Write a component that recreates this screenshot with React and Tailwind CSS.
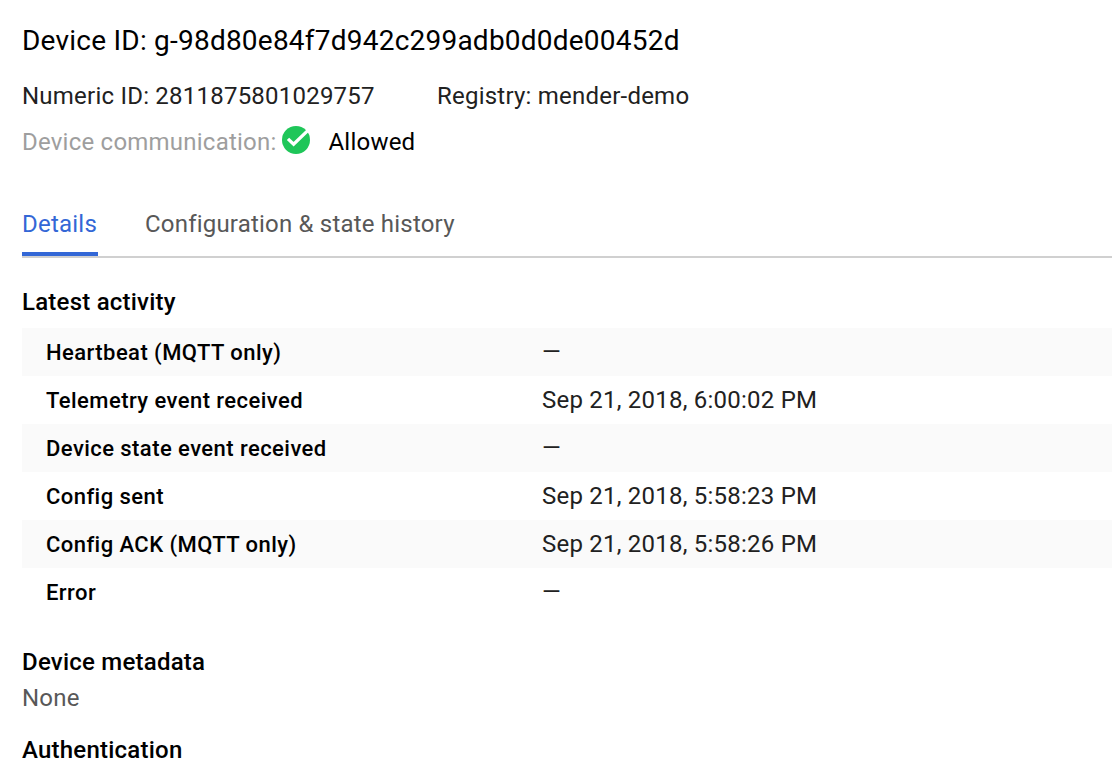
const activity = [
  ["Heartbeat (MQTT only)", "—"],
  ["Telemetry event received", "Sep 21, 2018, 6:00:02 PM"],
  ["Device state event received", "—"],
  ["Config sent", "Sep 21, 2018, 5:58:23 PM"],
  ["Config ACK (MQTT only)", "Sep 21, 2018, 5:58:26 PM"],
  ["Error", "—"],
];

function CheckIcon() {
  return (
    <svg className="mb-1 ml-[6px] size-7 shrink-0" viewBox="0 0 28 28">
      <circle cx="14" cy="14" r="14" fill="#1fc659" />
      <path d="M6 12.9 L11.6 18.3 L26 4.4" fill="none" stroke="#fff" strokeWidth="3.3" />
    </svg>
  );
}

export default function App() {
  return (
    <main className="h-[778px] w-[1112px] overflow-hidden bg-white pl-[22px] font-['Roboto',sans-serif] text-2xl tracking-[0.225px] text-[#212121]">
      <h1 className="pt-[25px] text-[28px] leading-8 text-black">Device ID: g-98d80e84f7d942c299adb0d0de00452d</h1>
      <div className="mt-[23px] flex h-8 items-center">
        <span className="w-[415px]">Numeric ID: 2811875801029757</span>
        <span>Registry: mender-demo</span>
      </div>
      <div className="mt-[14px] flex h-8 items-center">
        <span className="text-[#9e9e9e]">Device communication:</span>
        <CheckIcon />
        <span className="ml-[18px] text-black">Allowed</span>
      </div>
      <nav className="mt-8 flex h-[68px] gap-[47px] border-b-2 border-[#d0d0d0]">
        <span className="h-[66px] w-[76px] border-b-4 border-[#3367d6] pt-[18px] leading-8 text-[#3367d6]">Details</span>
        <span className="pt-[18px] leading-8 tracking-[0.2px] text-[#585858]">Configuration &amp; state history</span>
      </nav>
      <h2 className="mt-7 leading-8 font-medium text-black">Latest activity</h2>
      <div className="mt-[10px]">
        {activity.map(([label, value]) => (
          <div key={label} className="flex h-12 items-center pl-6 odd:bg-[#fafafa]">
            <span className="w-[496px] pt-0.5 text-[22px] font-medium tracking-[0.44px] text-black">{label}</span>
            <span>{value}</span>
          </div>
        ))}
      </div>
      <h2 className="mt-[30px] leading-8 font-medium text-black">Device metadata</h2>
      <p className="mt-1 leading-8 text-[#585858]">None</p>
      <h2 className="mt-5 leading-8 font-medium text-black">Authentication</h2>
    </main>
  );
}
